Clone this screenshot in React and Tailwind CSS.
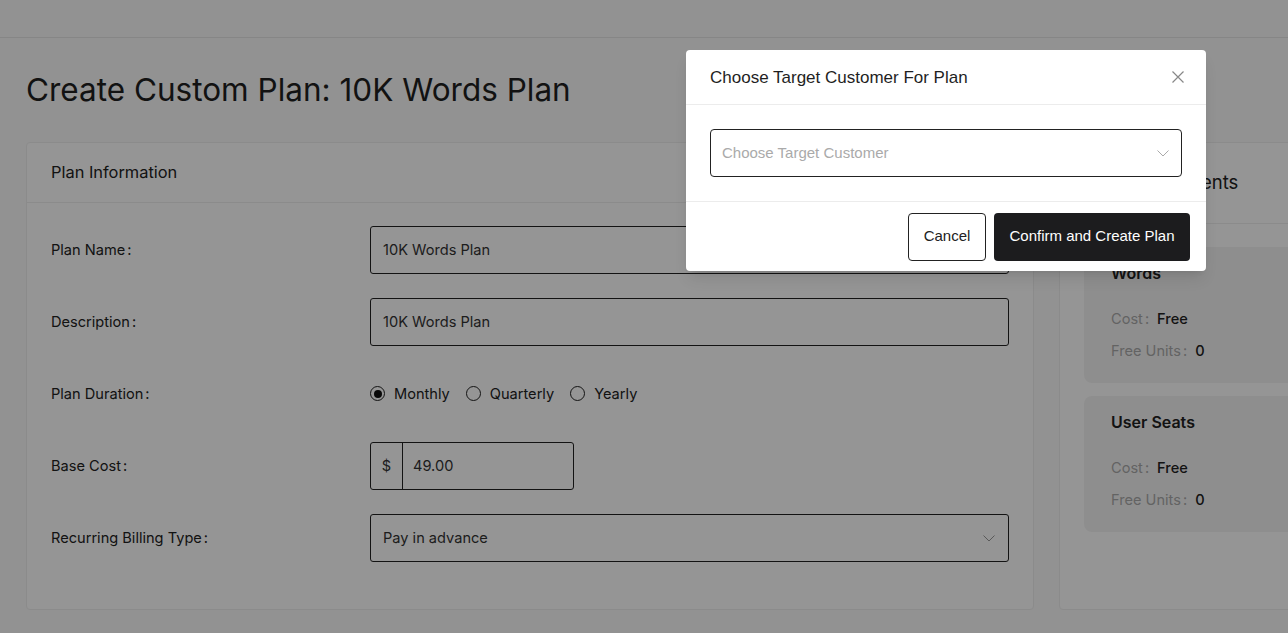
import React from "react";

const pageFont = { fontFamily: "Inter, 'Noto Sans', sans-serif" };
const modalFont = { fontFamily: "'Liberation Sans', Arial, sans-serif" };

function Chevron({ className }) {
  return (
    <svg className={className} width="14" height="14" viewBox="0 0 14 14" fill="none">
      <path d="M1.5 4.5 L7 10 L12.5 4.5" stroke="currentColor" strokeWidth="1" />
    </svg>
  );
}

function Row({ label, children }) {
  return (
    <div className="flex items-center h-[48px]">
      <div className="w-[319px] text-[14.6px] text-[#222] pt-[2px]">
        {label}
        <span className="ml-[2px]">:</span>
      </div>
      <div className="flex-1">{children}</div>
    </div>
  );
}

function TextBox({ value }) {
  return (
    <div className="h-[48px] border border-[#222] rounded-[3px] flex items-center px-[12px] pt-[2px] text-[14.6px] text-[#333]">
      {value}
    </div>
  );
}

function Radio({ checked, label }) {
  return (
    <label className="flex items-center gap-[9px] text-[14.6px] text-[#222]">
      <span className="w-[15px] h-[15px] rounded-full border border-[#222] flex items-center justify-center">
        {checked && <span className="w-[8px] h-[8px] rounded-full bg-[#111]" />}
      </span>
      <span className="pt-[2px]">{label}</span>
    </label>
  );
}

function Component({ title }) {
  return (
    <div className="rounded-[8px] bg-[#f4f4f4] px-[27px] pt-[14px] pb-[20px]">
      <div className="text-[16px] font-semibold text-[#222] leading-[24px]">{title}</div>
      <div className="mt-[22px] text-[14.6px] leading-[24px]">
        <span className="text-[#aaa]">Cost</span>
        <span className="text-[#aaa] ml-[2px] mr-[8px]">:</span>
        <span className="text-[#222] font-medium">Free</span>
      </div>
      <div className="mt-[8px] text-[14.6px] leading-[24px]">
        <span className="text-[#aaa]">Free Units</span>
        <span className="text-[#aaa] ml-[2px] mr-[8px]">:</span>
        <span className="text-[#222] font-medium">0</span>
      </div>
    </div>
  );
}

export default function App() {
  return (
    <div className="relative w-full h-[633px] overflow-hidden bg-[#fafafa]" style={pageFont}>
      <div className="h-[38px] border-b border-[#e6e6e6]" />
      <div className="px-[26px]">
        <h1 className="mt-[32px] text-[31.5px] leading-[40px] text-[#1f1f1f] font-normal">
          Create Custom Plan: 10K Words Plan
        </h1>
        <div className="mt-[32px] flex gap-[25px]">
          <div className="w-[1008px] shrink-0 h-[468px] bg-white border border-[#eeeeee] rounded-[4px]">
            <div className="h-[60px] border-b border-[#eeeeee] px-[24px] flex items-center text-[16.4px] text-[#222]">
              Plan Information
            </div>
            <div className="px-[24px] pt-[23px] flex flex-col gap-[24px]">
              <Row label="Plan Name">
                <TextBox value="10K Words Plan" />
              </Row>
              <Row label="Description">
                <TextBox value="10K Words Plan" />
              </Row>
              <Row label="Plan Duration">
                <div className="flex items-center gap-[16px]">
                  <Radio checked label="Monthly" />
                  <Radio label="Quarterly" />
                  <Radio label="Yearly" />
                </div>
              </Row>
              <Row label="Base Cost">
                <div className="w-[204px] h-[48px] border border-[#222] rounded-[3px] flex items-center text-[14.6px] text-[#333]">
                  <div className="w-[32px] h-full border-r border-[#222] flex items-center justify-center pt-[2px]">$</div>
                  <div className="pl-[10px] pt-[2px]">49.00</div>
                </div>
              </Row>
              <Row label="Recurring Billing Type">
                <div className="h-[48px] border border-[#222] rounded-[3px] flex items-center justify-between px-[12px] text-[14.6px] text-[#333]">
                  <span className="pt-[2px]">Pay in advance</span>
                  <Chevron className="text-[#999]" />
                </div>
              </Row>
            </div>
          </div>
          <div className="w-[300px] shrink-0 h-[468px] bg-white border border-[#eeeeee] rounded-[4px]">
            <div className="h-[81px] border-b border-[#eeeeee] px-[24px] flex items-center text-[18.5px] text-[#222]">
              Plan Components
            </div>
            <div className="px-[24px] pt-[23px] flex flex-col gap-[13px]">
              <Component title="Words" />
              <Component title="User Seats" />
            </div>
          </div>
        </div>
      </div>

      <div className="absolute inset-0 bg-black/[0.415]" />

      <div
        className="absolute left-[686px] top-[50px] w-[520px] bg-white rounded-[4px] shadow-lg"
        style={modalFont}
      >
        <div className="h-[55px] border-b border-[#ececec] px-[24px] flex items-center justify-between">
          <span className="text-[17px] text-[#1f1f1f] pt-[1px]">Choose Target Customer For Plan</span>
          <svg width="14" height="14" viewBox="0 0 14 14" className="mr-[-3px] text-[#888]">
            <path d="M1.5 1.5 L12.5 12.5 M12.5 1.5 L1.5 12.5" stroke="currentColor" strokeWidth="1.2" />
          </svg>
        </div>
        <div className="px-[24px] py-[24px] border-b border-[#ececec]">
          <div className="h-[48px] border border-[#222] rounded-[4px] flex items-center justify-between px-[11px] text-[15px]">
            <span className="text-[#aaa]">Choose Target Customer</span>
            <Chevron className="text-[#aaa]" />
          </div>
        </div>
        <div className="h-[69px] flex items-center justify-end gap-[8px] pr-[16px]">
          <button className="h-[48px] w-[78px] border border-[#222] rounded-[4px] text-[15px] text-[#222] bg-white">
            Cancel
          </button>
          <button className="h-[48px] w-[196px] rounded-[4px] text-[15px] text-white bg-[#1c1c1e]">
            Confirm and Create Plan
          </button>
        </div>
      </div>
    </div>
  );
}
